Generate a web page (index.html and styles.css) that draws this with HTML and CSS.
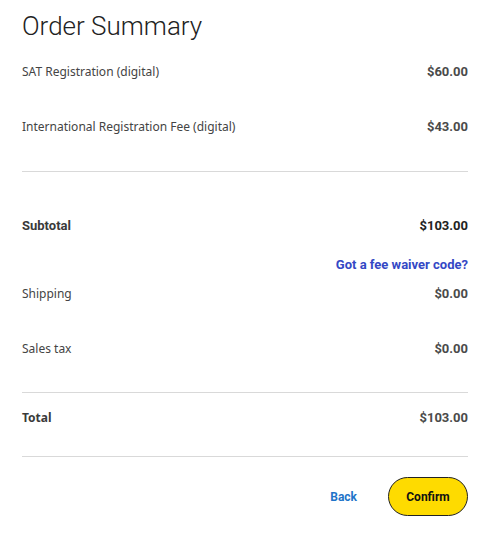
FILE: index.html
```html
<!DOCTYPE html>
<html>
<head>
<meta charset="utf-8">
<link rel="stylesheet" href="styles.css">
</head>
<body>
<main class="summary">
  <h1 class="title">Order Summary</h1>
  <div class="row item"><span class="label">SAT Registration (digital)</span><span class="amount">$60.00</span></div>
  <div class="row item"><span class="label">International Registration Fee (digital)</span><span class="amount">$43.00</span></div>
  <hr class="divider">
  <div class="row subtotal"><span class="label strong">Subtotal</span><span class="amount dark">$103.00</span></div>
  <div class="waiver"><a class="waiver-link" href="#">Got a fee waiver code?</a></div>
  <div class="row item"><span class="label">Shipping</span><span class="amount">$0.00</span></div>
  <div class="row item last"><span class="label">Sales tax</span><span class="amount">$0.00</span></div>
  <hr class="divider">
  <div class="row total"><span class="label total-label">Total</span><span class="amount">$103.00</span></div>
  <hr class="divider">
  <div class="actions">
    <a class="back" href="#">Back</a>
    <button class="confirm" type="button">Confirm</button>
  </div>
</main>
</body>
</html>
```

FILE: styles.css
```css
html, body {
  margin: 0;
  padding: 0;
  background: #fff;
}
.summary {
  padding: 9px 34px 0 22px;
  font-family: "Noto Sans", "Open Sans", sans-serif;
  color: #3a3a3a;
}
.title {
  margin: 0 0 18px 0;
  font-family: Roboto, sans-serif;
  font-weight: 300;
  font-size: 26px;
  line-height: 34px;
  color: #222;
}
.row {
  display: flex;
  justify-content: space-between;
  align-items: center;
  height: 20px;
  font-size: 12px;
}
.item {
  margin-bottom: 35px;
}
.item.last {
  margin-bottom: 34px;
}
.label {
  color: #444;
}
.strong {
  font-family: Roboto, sans-serif;
  font-weight: 700;
  font-size: 13px;
  color: #3a3a3a;
}
.total-label {
  font-weight: 700;
  color: #3a3a3a;
}
.amount {
  font-family: Roboto, sans-serif;
  font-weight: 700;
  font-size: 13px;
  color: #4a4a4a;
}
.amount.dark {
  color: #222;
}
.divider {
  border: 0;
  border-top: 1px solid #d9d9d9;
  margin: 0;
}
.subtotal {
  margin-top: 43px;
}
.waiver {
  display: flex;
  justify-content: flex-end;
  margin-top: 19px;
  margin-bottom: 9px;
  height: 20px;
  align-items: center;
}
.waiver-link {
  font-family: Roboto, sans-serif;
  font-weight: 700;
  font-size: 13px;
  color: #3448c5;
  text-decoration: none;
}
.total {
  margin-top: 14px;
  margin-bottom: 29px;
}
.actions {
  display: flex;
  justify-content: flex-end;
  align-items: center;
  margin-top: 20px;
  gap: 31px;
}
.back {
  font-family: Roboto, sans-serif;
  font-weight: 700;
  font-size: 12px;
  color: #1f74c9;
  text-decoration: none;
}
.confirm {
  width: 80px;
  height: 39px;
  border: 1px solid #222;
  border-radius: 20px;
  background: #fedb00;
  font-family: Roboto, sans-serif;
  font-weight: 700;
  font-size: 12px;
  color: #111;
  padding: 0;
}
```
